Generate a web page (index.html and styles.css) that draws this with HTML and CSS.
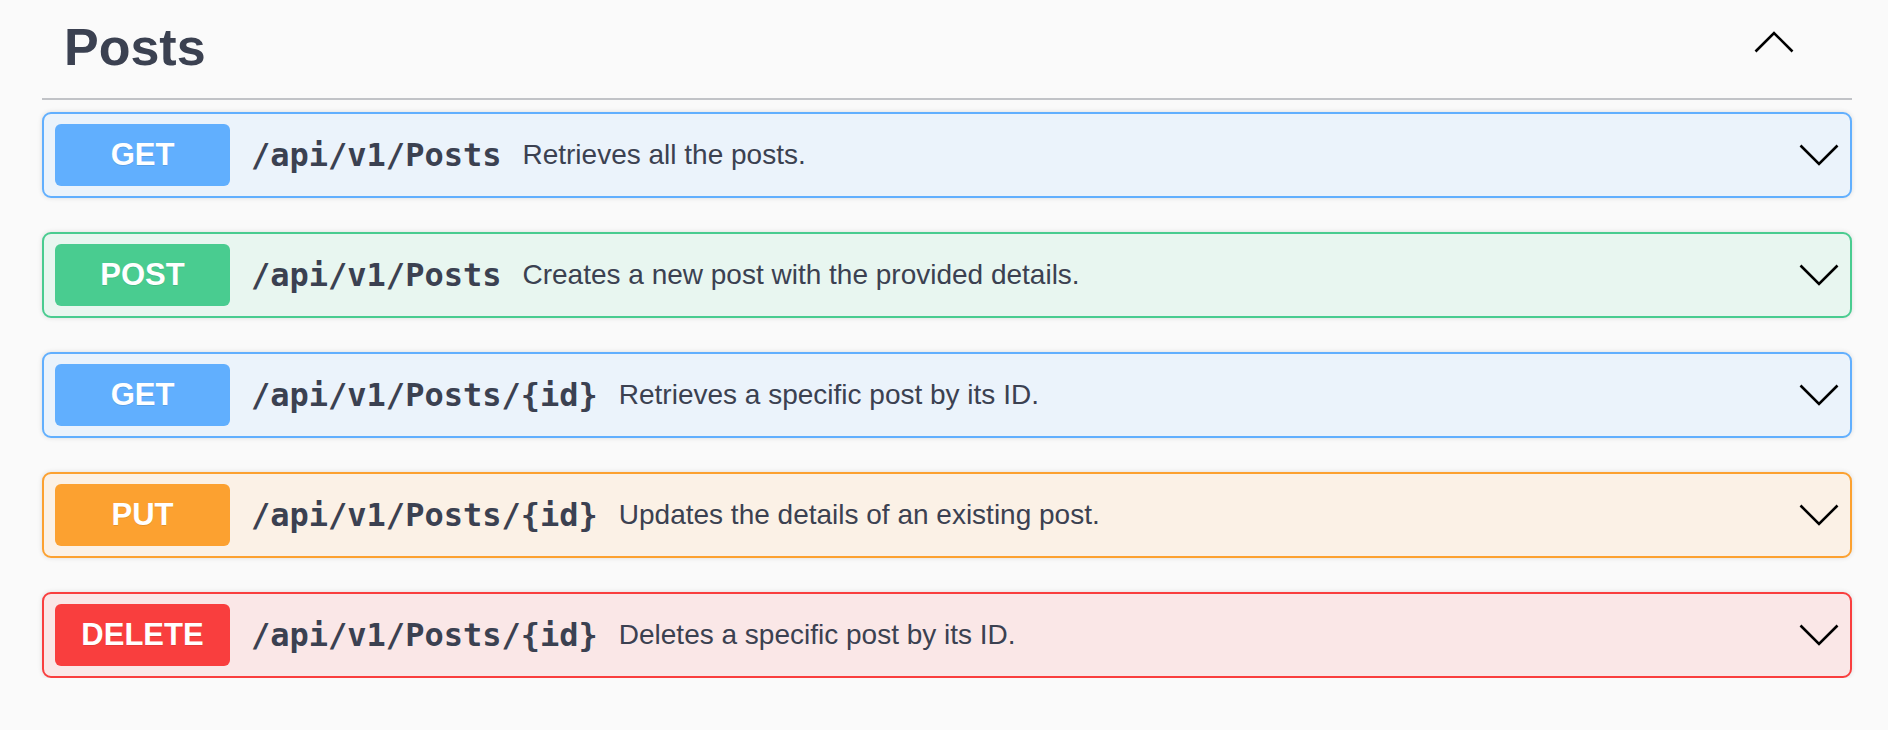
FILE: index.html
```html
<!DOCTYPE html>
<html lang="en">
<head>
<meta charset="utf-8">
<title>Posts</title>
<link rel="stylesheet" href="styles.css">
</head>
<body>
<section class="tag-section">
  <div class="tag-header">
    <h3 class="tag-title">Posts</h3>
    <svg class="tag-arrow" width="40" height="22" viewBox="0 0 40 22" aria-hidden="true"><polyline points="1.5,20.5 20,2 38.5,20.5" fill="none" stroke="#000" stroke-width="2.6" stroke-linejoin="miter"/></svg>
  </div>
  <div class="ops">
    <div class="op op-get">
      <span class="method">GET</span>
      <span class="path">/api/v1/Posts</span>
      <span class="desc">Retrieves all the posts.</span>
      <svg class="arrow" width="40" height="22" viewBox="0 0 40 22" aria-hidden="true"><polyline points="1.5,1.5 20,20 38.5,1.5" fill="none" stroke="#000" stroke-width="2.6"/></svg>
    </div>
    <div class="op op-post">
      <span class="method">POST</span>
      <span class="path">/api/v1/Posts</span>
      <span class="desc">Creates a new post with the provided details.</span>
      <svg class="arrow" width="40" height="22" viewBox="0 0 40 22" aria-hidden="true"><polyline points="1.5,1.5 20,20 38.5,1.5" fill="none" stroke="#000" stroke-width="2.6"/></svg>
    </div>
    <div class="op op-get">
      <span class="method">GET</span>
      <span class="path">/api/v1/Posts/{id}</span>
      <span class="desc">Retrieves a specific post by its ID.</span>
      <svg class="arrow" width="40" height="22" viewBox="0 0 40 22" aria-hidden="true"><polyline points="1.5,1.5 20,20 38.5,1.5" fill="none" stroke="#000" stroke-width="2.6"/></svg>
    </div>
    <div class="op op-put">
      <span class="method">PUT</span>
      <span class="path">/api/v1/Posts/{id}</span>
      <span class="desc">Updates the details of an existing post.</span>
      <svg class="arrow" width="40" height="22" viewBox="0 0 40 22" aria-hidden="true"><polyline points="1.5,1.5 20,20 38.5,1.5" fill="none" stroke="#000" stroke-width="2.6"/></svg>
    </div>
    <div class="op op-delete">
      <span class="method">DELETE</span>
      <span class="path">/api/v1/Posts/{id}</span>
      <span class="desc">Deletes a specific post by its ID.</span>
      <svg class="arrow" width="40" height="22" viewBox="0 0 40 22" aria-hidden="true"><polyline points="1.5,1.5 20,20 38.5,1.5" fill="none" stroke="#000" stroke-width="2.6"/></svg>
    </div>
  </div>
</section>
</body>
</html>
```

FILE: styles.css
```css
html, body {
  margin: 0;
  padding: 0;
  background: #fafafa;
}

body {
  font-family: "Liberation Sans", Arial, sans-serif;
  color: #3b4151;
}

.tag-section {
  padding: 0 36px 0 42px;
}

.tag-header {
  display: flex;
  align-items: flex-start;
  justify-content: space-between;
  height: 98px;
  box-sizing: content-box;
  border-bottom: 2px solid #c1c3c7;
  padding: 0 58px 0 22px;
}

.tag-title {
  margin: 17px 0 0 0;
  font-size: 52px;
  line-height: 60px;
  font-weight: 700;
  letter-spacing: 0;
  color: #3b4151;
}

.tag-arrow {
  display: block;
  margin-top: 31px;
}

.ops {
  padding-top: 12px;
  display: flex;
  flex-direction: column;
  gap: 34px;
}

.op {
  display: flex;
  align-items: center;
  border: 2px solid;
  border-radius: 9px;
  padding: 10px 11px;
  box-shadow: 0 0 5px rgba(0, 0, 0, 0.12);
}

.method {
  flex: 0 0 auto;
  width: 175px;
  height: 62px;
  border-radius: 6px;
  display: flex;
  align-items: center;
  justify-content: center;
  color: #fff;
  font-family: "Liberation Sans", Arial, sans-serif;
  font-weight: 700;
  font-size: 31px;
  text-shadow: 0 1px 0 rgba(0, 0, 0, 0.1);
}

.path {
  flex: 0 0 auto;
  padding: 0 21px 0 21px;
  font-family: "DejaVu Sans Mono", "Liberation Mono", monospace;
  font-weight: 700;
  font-size: 32px;
  color: #3b4151;
}

.desc {
  flex: 1 1 auto;
  font-size: 28px;
  color: #3b4151;
}

.arrow {
  flex: 0 0 auto;
  display: block;
}

.op-get { background: #ebf3fb; border-color: #61affe; }
.op-get .method { background: #61affe; }

.op-post { background: #e8f6f0; border-color: #49cc90; }
.op-post .method { background: #49cc90; }

.op-put { background: #fbf1e6; border-color: #fca130; }
.op-put .method { background: #fca130; }

.op-delete { background: #fae7e7; border-color: #f93e3e; }
.op-delete .method { background: #f93e3e; }
```
